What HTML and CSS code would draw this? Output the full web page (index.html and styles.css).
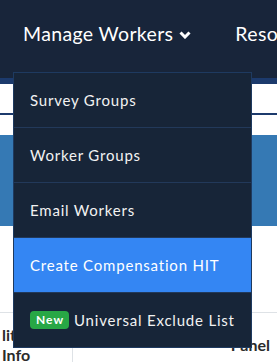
FILE: index.html
```html
<!DOCTYPE html>
<html lang="en">
<head>
    <meta charset="UTF-8">
    <meta name="viewport" content="width=device-width, initial-scale=1.0">
    <title>Manage Workers</title>
    <link rel="stylesheet" href="styles.css">
</head>
<body>
    <nav class="navbar">
        <div class="nav-item">
            <a class="nav-link" href="#">Manage Workers
                <svg class="chevron" width="12" height="8" viewBox="0 0 12 8">
                    <path d="M1.5 1.5 L6 6 L10.5 1.5" fill="none" stroke="#fff" stroke-width="3" stroke-linejoin="miter"/>
                </svg>
            </a>
            <div class="dropdown">
                <a class="dropdown-item" href="#">Survey Groups</a>
                <a class="dropdown-item" href="#">Worker Groups</a>
                <a class="dropdown-item" href="#">Email Workers</a>
                <a class="dropdown-item active" href="#">Create Compensation HIT</a>
                <a class="dropdown-item" href="#"><span class="badge">New</span>Universal Exclude List</a>
            </div>
        </div>
        <div class="nav-item">
            <a class="nav-link" href="#">Resources</a>
        </div>
    </nav>

    <div class="subnav"></div>
    <div class="banner"></div>

    <table class="workers-table">
        <thead>
            <tr>
                <th class="col-info">lit<br>Info</th>
                <th class="col-panel">Panel</th>
            </tr>
        </thead>
    </table>
</body>
</html>
```

FILE: styles.css
```css
* {
    margin: 0;
    padding: 0;
    box-sizing: border-box;
}

body {
    font-family: Lato, 'Noto Sans', sans-serif;
    background: #fff;
    color: #333;
    overflow: hidden;
}

a {
    text-decoration: none;
    color: inherit;
}

.navbar {
    display: flex;
    height: 84px;
    background: #18253a;
    border-bottom: 6px solid #1c3a6c;
    padding-left: 23px;
    gap: 44px;
    white-space: nowrap;
}

.nav-item {
    position: relative;
}

.nav-link {
    display: flex;
    align-items: center;
    gap: 6px;
    padding-top: 22px;
    color: #fff;
    font-size: 19.5px;
    line-height: 24px;
    letter-spacing: 0.35px;
}

.chevron {
    margin-top: 1px;
}

.dropdown {
    position: absolute;
    top: 72px;
    left: -10px;
    width: 239px;
    background: #172538;
    border: 1px solid #1e3a60;
    z-index: 10;
}

.dropdown-item {
    display: flex;
    align-items: center;
    height: 55px;
    padding-left: 16px;
    border-bottom: 1px solid #22395a;
    color: #f2f2f2;
    font-size: 15px;
    letter-spacing: 0.8px;
}

.dropdown-item:last-child {
    border-bottom: none;
    height: 54px;
}

.dropdown-item.active {
    background: #3486f3;
    color: #fff;
}

.badge {
    display: inline-block;
    background: #28a745;
    color: #fff;
    font-size: 12px;
    font-weight: 700;
    letter-spacing: 1px;
    line-height: 18px;
    padding: 0 5px 0 6px;
    border-radius: 4px;
    margin-right: 5px;
}

.subnav {
    height: 31px;
    border-bottom: 2px solid #1c3a6c;
}

.banner {
    height: 91px;
    margin-top: 20px;
    background: #3579b4;
}

.workers-table {
    width: 100%;
    margin-top: 86px;
    border-collapse: collapse;
    border-top: 1px solid #dee2e6;
}

.workers-table th {
    font-size: 16px;
    font-weight: 700;
    line-height: 20px;
    text-align: left;
    vertical-align: middle;
    padding: 12px 2px 4px;
    color: #2b2b2b;
}

.col-info {
    width: 72px;
    border-right: 1px solid #dee2e6;
}

.col-panel {
    text-align: right !important;
    padding-right: 7px !important;
}
```
